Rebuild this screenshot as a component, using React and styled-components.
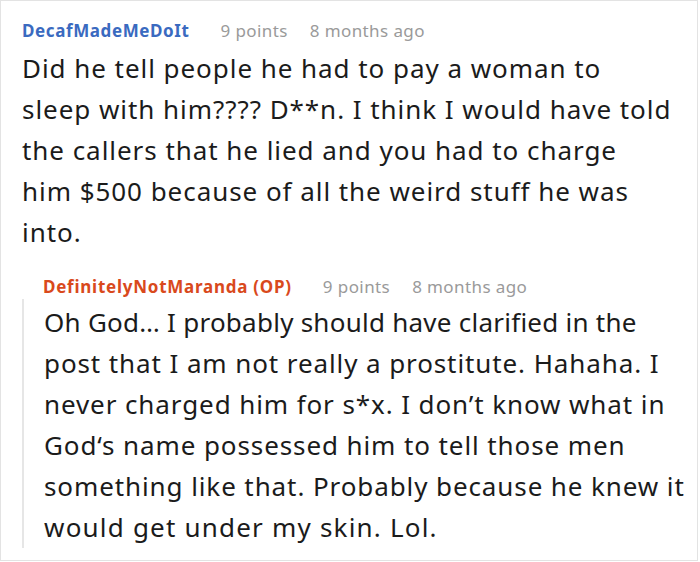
import React from "react";
import styled, { createGlobalStyle } from "styled-components";

const Global = createGlobalStyle`
  html, body { margin: 0; padding: 0; background: #fff; }
  body { font-family: "Noto Sans", "Open Sans", sans-serif; }
`;

const Frame = styled.div`
  box-sizing: border-box;
  width: 698px;
  height: 561px;
  border: 1px solid #e3e3e3;
  padding: 18px 10px 0 21px;
  overflow: hidden;
`;

const Comment = styled.div`
  display: flex;
  flex-direction: column;
`;

const Header = styled.div`
  display: flex;
  align-items: baseline;
  font-size: 17px;
  line-height: 24px;
  letter-spacing: ${(p) => p.$spacing}px;
  padding-left: ${(p) => (p.$indent ? "21px" : "0")};
`;

const User = styled.span`
  font-weight: 700;
  color: ${(p) => p.$color};
`;

const Meta = styled.span`
  color: #9a9a9a;
  letter-spacing: 0.4px;
  margin-left: ${(p) => p.$gap}px;
`;

const Body = styled.p`
  margin: 5px 0 0 0;
  font-size: 26px;
  line-height: 41px;
  letter-spacing: ${(p) => p.$spacing}px;
  color: #1b1b1b;
`;

const Line = styled.span`
  display: block;
  white-space: nowrap;
  ${(p) => (p.$spacing != null ? `letter-spacing: ${p.$spacing}px;` : "")}
`;

const Reply = styled.div`
  display: flex;
  flex-direction: column;
  margin-top: 22px;
`;

const ReplyBody = styled(Body)`
  margin: 0;
  padding: 3px 0 0 20px;
  border-left: 2px solid #e6e6e6;
`;

const first = [
  { t: "Did he tell people he had to pay a woman to" },
  { t: "sleep with him???? D**n. I think I would have told" },
  { t: "the callers that he lied and you had to charge" },
  { t: "him $500 because of all the weird stuff he was" },
  { t: "into." },
];

const reply = [
  { t: "Oh God… I probably should have clarified in the", s: 0.25 },
  { t: "post that I am not really a prostitute. Hahaha. I" },
  { t: "never charged him for s*x. I don’t know what in" },
  { t: "God‘s name possessed him to tell those men" },
  { t: "something like that. Probably because he knew it" },
  { t: "would get under my skin. Lol.", s: 1.2 },
];

export default function App() {
  return (
    <>
      <Global />
      <Frame>
        <Comment>
          <Header $spacing={0.6}>
            <User $color="#3a6ac0">DecafMadeMeDoIt</User>
            <Meta $gap={31}>9 points</Meta>
            <Meta $gap={22}>8 months ago</Meta>
          </Header>
          <Body $spacing={0.95}>
            {first.map((l) => (
              <Line key={l.t} $spacing={l.s}>{l.t}</Line>
            ))}
          </Body>
        </Comment>
        <Reply>
          <Header $indent $spacing={0.75}>
            <User $color="#d9491c">DefinitelyNotMaranda (OP)</User>
            <Meta $gap={31}>9 points</Meta>
            <Meta $gap={22}>8 months ago</Meta>
          </Header>
          <ReplyBody $spacing={0.9}>
            {reply.map((l) => (
              <Line key={l.t} $spacing={l.s}>{l.t}</Line>
            ))}
          </ReplyBody>
        </Reply>
      </Frame>
    </>
  );
}
